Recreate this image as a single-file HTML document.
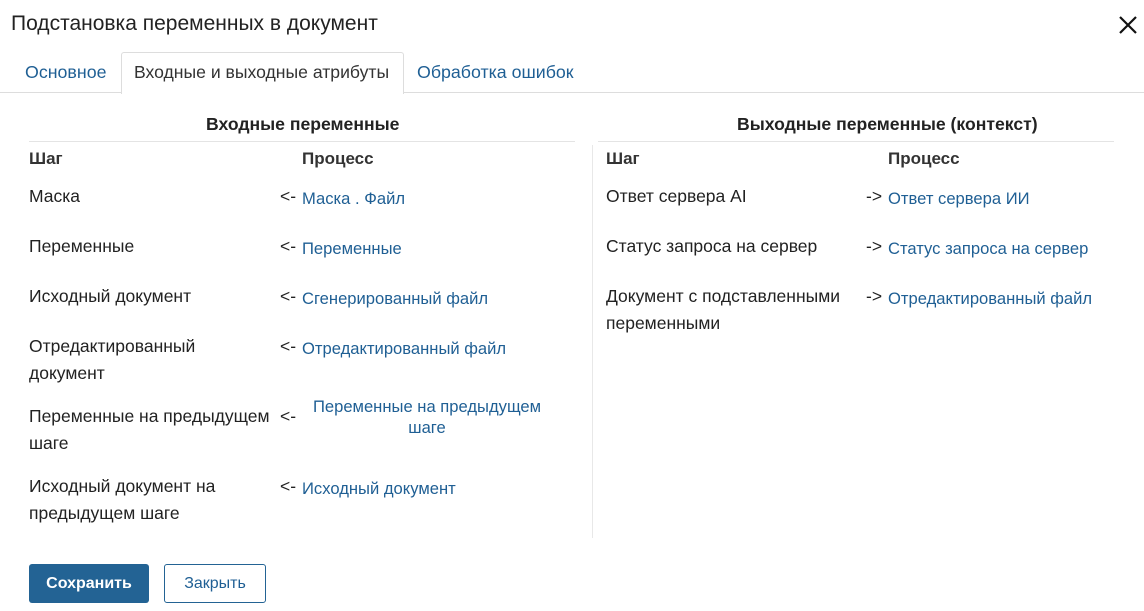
<!DOCTYPE html>
<html><head><meta charset="utf-8"><style>
body{margin:0;width:1144px;height:611px;background:#fff;font-family:"Liberation Sans",sans-serif;color:#222;position:relative;overflow:hidden}
.t{position:absolute;white-space:nowrap;line-height:27px;font-size:17.5px}
.l{color:#1f5f94;font-size:16.6px}
.b{font-weight:bold;color:#333;font-size:17px}
.h{position:absolute;height:1px;background:#e4e4e4}
</style></head><body>
<div class="t" style="left:11px;top:10px;font-size:21px;color:#222">Подстановка переменных в документ</div>
<svg style="position:absolute;left:1118px;top:15px" width="20" height="20" viewBox="0 0 20 20"><path d="M2 2L18 18M18 2L2 18" stroke="#111" stroke-width="2.2"/></svg>
<div class="h" style="left:0;top:92px;width:1144px;background:#ddd"></div>
<div style="position:absolute;left:121px;top:52px;width:281px;height:41px;border:1px solid #ddd;border-bottom:none;background:#fff;border-radius:3px 3px 0 0"></div>
<div class="t l" style="left:25px;top:59px;font-size:17.8px">Основное</div>
<div class="t" style="left:134px;top:59px;font-size:17.6px;color:#333">Входные и выходные атрибуты</div>
<div class="t l" style="left:417px;top:59px;font-size:17.8px">Обработка ошибок</div>

<div class="t" style="left:206px;top:111px;font-size:17.6px;font-weight:bold;color:#222">Входные переменные</div>
<div class="t" style="left:737px;top:111px;font-size:17.6px;font-weight:bold;color:#222">Выходные переменные (контекст)</div>
<div class="h" style="left:29px;top:141px;width:546px"></div>
<div class="h" style="left:598px;top:141px;width:516px"></div>
<div style="position:absolute;left:592px;top:145px;width:1px;height:393px;background:#e8e8e8"></div>

<div class="t b" style="left:29px;top:145px">Шаг</div>
<div class="t b" style="left:302px;top:145px">Процесс</div>
<div class="t b" style="left:606px;top:145px">Шаг</div>
<div class="t b" style="left:888px;top:145px">Процесс</div>

<div class="t" style="left:29px;top:183px">Маска</div>
<div class="t" style="left:280px;top:183px">&lt;-</div>
<div class="t l" style="left:302px;top:185px">Маска . Файл</div>

<div class="t" style="left:29px;top:233px">Переменные</div>
<div class="t" style="left:280px;top:233px">&lt;-</div>
<div class="t l" style="left:302px;top:235px">Переменные</div>

<div class="t" style="left:29px;top:283px">Исходный документ</div>
<div class="t" style="left:280px;top:283px">&lt;-</div>
<div class="t l" style="left:302px;top:285px">Сгенерированный файл</div>

<div class="t" style="left:29px;top:333px">Отредактированный<br>документ</div>
<div class="t" style="left:280px;top:333px">&lt;-</div>
<div class="t l" style="left:302px;top:335px">Отредактированный файл</div>

<div class="t" style="left:29px;top:403px">Переменные на предыдущем<br>шаге</div>
<div class="t" style="left:280px;top:403px">&lt;-</div>
<div class="t l" style="left:302px;top:396px;line-height:21px;text-align:center;width:250px;white-space:normal">Переменные на предыдущем шаге</div>

<div class="t" style="left:29px;top:473px">Исходный документ на<br>предыдущем шаге</div>
<div class="t" style="left:280px;top:473px">&lt;-</div>
<div class="t l" style="left:302px;top:475px">Исходный документ</div>

<div class="t" style="left:606px;top:183px">Ответ сервера AI</div>
<div class="t" style="left:866px;top:183px">-&gt;</div>
<div class="t l" style="left:888px;top:185px">Ответ сервера ИИ</div>

<div class="t" style="left:606px;top:233px">Статус запроса на сервер</div>
<div class="t" style="left:866px;top:233px">-&gt;</div>
<div class="t l" style="left:888px;top:235px">Статус запроса на сервер</div>

<div class="t" style="left:606px;top:283px">Документ с подставленными<br>переменными</div>
<div class="t" style="left:866px;top:283px">-&gt;</div>
<div class="t l" style="left:888px;top:285px">Отредактированный файл</div>

<div style="position:absolute;left:29px;top:564px;width:120px;height:39px;background:#236394;border-radius:3px;color:#fff;font-weight:bold;font-size:16px;line-height:39px;text-align:center">Сохранить</div>
<div style="position:absolute;left:164px;top:564px;width:100px;height:37px;border:1px solid #236394;border-radius:3px;color:#1f5f94;font-size:16px;line-height:37px;text-align:center">Закрыть</div>
</body></html>
